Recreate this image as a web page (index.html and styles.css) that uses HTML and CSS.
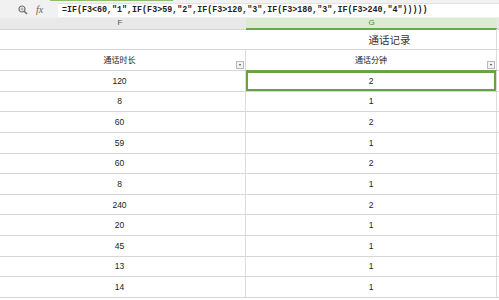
FILE: index.html
```html
<!DOCTYPE html>
<html>
<head>
<meta charset="utf-8">
<link rel="stylesheet" href="styles.css">
</head>
<body>
<div class="formula">
  <div class="tabline"></div>
  <div class="fbar">
    <div class="ficons">
      <svg class="zoom" width="10" height="10" viewBox="0 0 10 10"><circle cx="4" cy="4" r="3" fill="none" stroke="#707070" stroke-width="1.2"/><path d="M6.2 6.2 L9 9" stroke="#707070" stroke-width="1.6"/><path d="M2.5 4h3M4 2.5v3" stroke="#909090" stroke-width="0.8"/></svg>
      <span class="fx">fx</span>
    </div>
    <div class="finput">=IF(F3&lt;60,"1",IF(F3&gt;59,"2",IF(F3&gt;120,"3",IF(F3&gt;180,"3",IF(F3&gt;240,"4")))))</div>
  </div>
</div>
<div class="colheads">
  <div class="ch chf">F</div>
  <div class="ch chg">G</div>
  <div class="ch chh"></div>
</div>
<div class="sheet">
  <div class="c title-f"></div>
  <div class="c title-g"><span class="title">通话记录</span></div>
  <div class="c h"></div>

  <div class="c hd f">通话时长<span class="dd"></span></div>
  <div class="c hd g">通话分钟<span class="dd"></span></div>
  <div class="c h"></div>

  <div class="c f">120</div><div class="c g sel">2</div><div class="c h"></div>
  <div class="c f">8</div><div class="c g">1</div><div class="c h"></div>
  <div class="c f">60</div><div class="c g">2</div><div class="c h"></div>
  <div class="c f">59</div><div class="c g">1</div><div class="c h"></div>
  <div class="c f">60</div><div class="c g">2</div><div class="c h"></div>
  <div class="c f">8</div><div class="c g">1</div><div class="c h"></div>
  <div class="c f">240</div><div class="c g">2</div><div class="c h"></div>
  <div class="c f">20</div><div class="c g">1</div><div class="c h"></div>
  <div class="c f">45</div><div class="c g">1</div><div class="c h"></div>
  <div class="c f">13</div><div class="c g">1</div><div class="c h"></div>
  <div class="c f">14</div><div class="c g">1</div><div class="c h"></div>
</div>
</body>
</html>
```
FILE: styles.css
```css
html, body {
  margin: 0;
  padding: 0;
  background: #ffffff;
}
body {
  width: 499px;
  height: 300px;
  overflow: hidden;
  font-family: "Liberation Sans", "Noto Sans CJK SC", sans-serif;
  color: #222;
}
.formula {
  background: #f1f1f1;
  height: 18px;
}
.tabline {
  margin-left: 50px;
  width: 123px;
  height: 1px;
  background: #8cc06c;
}
.fbar {
  display: flex;
  height: 17px;
}
.ficons {
  width: 58px;
  display: flex;
  align-items: center;
  padding-left: 18px;
  box-sizing: border-box;
  gap: 8px;
}
.fx {
  font-family: "Liberation Serif", serif;
  font-style: italic;
  font-size: 10px;
  color: #666;
}
.finput {
  flex: 1;
  background: #fff;
  margin-top: 2px;
  height: 14px;
  border-top: 1px solid #e2e2e2;
  box-sizing: border-box;
  font-family: "Liberation Mono", monospace;
  font-size: 8.35px;
  line-height: 12px;
  padding-left: 4px;
  color: #222;
  white-space: nowrap;
  font-weight: bold;
}
.colheads {
  display: grid;
  grid-template-columns: 246px 251px 1fr;
  height: 11px;
}
.ch {
  font-size: 8px;
  line-height: 10px;
  text-align: center;
  box-sizing: border-box;
}
.chf {
  background: #e9e9e9;
  color: #555;
  border-bottom: 1px solid #d4d4d4;
  padding-right: 6px;
}
.chg {
  background: #dcebd4;
  color: #4b8b2b;
  border-bottom: 2px solid #6aa84a;
}
.chh {
  background: #e9e9e9;
  border-bottom: 1px solid #d4d4d4;
}
.sheet {
  display: grid;
  grid-template-columns: 246px 251px 1fr;
  grid-template-rows: 21px 21px repeat(11, 20.64px);
}
.c {
  box-sizing: border-box;
  border-bottom: 1px solid #d6d6d6;
  border-right: 1px solid #dcdcdc;
  display: flex;
  align-items: center;
  justify-content: center;
  font-size: 8.5px;
  position: relative;
}
.f {
  padding-right: 6px;
}
.title-f {
  border-right: none;
}
.title-g {
  padding-left: 37px;
}
.title {
  font-size: 10.5px;
  color: #333;
}
.hd {
  font-size: 8px;
  padding-bottom: 2px;
}
.hd.g {
  border-bottom-color: #6aa84a;
}
.h {
  border-right: none;
}
.dd {
  position: absolute;
  right: 1px;
  bottom: 1px;
  width: 8px;
  height: 8px;
  box-sizing: border-box;
  border: 1px solid #b8b8b8;
  background: #f4f4f4;
}
.dd::after {
  content: "";
  position: absolute;
  left: 1.5px;
  top: 2px;
  border-left: 1.5px solid transparent;
  border-right: 1.5px solid transparent;
  border-top: 2px solid #444;
}
.sel {
  box-shadow: inset 0 0 0 2px #65a446;
}
```
